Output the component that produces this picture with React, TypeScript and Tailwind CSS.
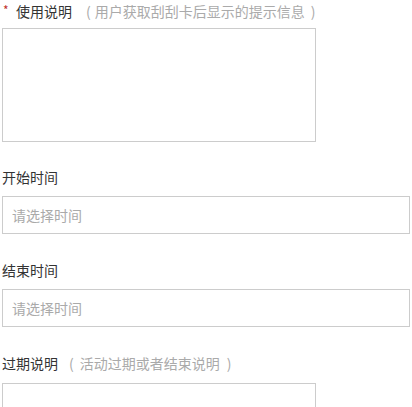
import React from "react";

const font = {
  fontFamily: '"Noto Sans CJK SC", "Microsoft YaHei", sans-serif',
};

function Label({
  text,
  hint,
  required,
  hintClass = "",
}: {
  text: string;
  hint?: string;
  required?: boolean;
  hintClass?: string;
}) {
  return (
    <div className="flex h-5 items-center text-[14px] leading-5 text-[#333]">
      {required && (
        <span className="-mt-[2px] w-[14px] pl-[1px] text-[12px] text-[#c0312b]">*</span>
      )}
      <span>{text}</span>
      {hint && (
        <span className={`flex text-[#aaa] ${hintClass}`}>
          <span>(</span>
          <span className="hint-text">{hint}</span>
          <span>)</span>
        </span>
      )}
    </div>
  );
}

export default function App() {
  return (
    <div className="w-[412px] h-[407px] overflow-hidden bg-white pl-[2px]" style={font}>
      {/* 使用说明 */}
      <div className="pt-[1px]">
        <Label
          text="使用说明"
          hint="用户获取刮刮卡后显示的提示信息"
          required
          hintClass="ml-[14px] [&>.hint-text]:pl-[4px] [&>.hint-text]:pr-[6px]"
        />
        <textarea className="mt-[7px] block h-[114px] w-[314px] resize-none border border-[#ccc] outline-none" />
      </div>

      {/* 开始时间 */}
      <div className="mt-[25px]">
        <Label text="开始时间" />
        <input
          readOnly
          placeholder="请选择时间"
          className="mt-[9px] block h-[38px] w-[408px] border border-[#ccc] px-[9px] text-[14px] outline-none placeholder:text-[#aaa]"
        />
      </div>

      {/* 结束时间 */}
      <div className="mt-[26px]">
        <Label text="结束时间" />
        <input
          readOnly
          placeholder="请选择时间"
          className="mt-[9px] block h-[38px] w-[408px] border border-[#ccc] px-[9px] text-[14px] outline-none placeholder:text-[#aaa]"
        />
      </div>

      {/* 过期说明 */}
      <div className="mt-[26px]">
        <Label
          text="过期说明"
          hint="活动过期或者结束说明"
          hintClass="ml-[11px] [&>.hint-text]:pl-[6px] [&>.hint-text]:pr-[7px]"
        />
        <textarea className="mt-[10px] block h-[114px] w-[314px] resize-none border border-[#ccc] outline-none" />
      </div>
    </div>
  );
}
